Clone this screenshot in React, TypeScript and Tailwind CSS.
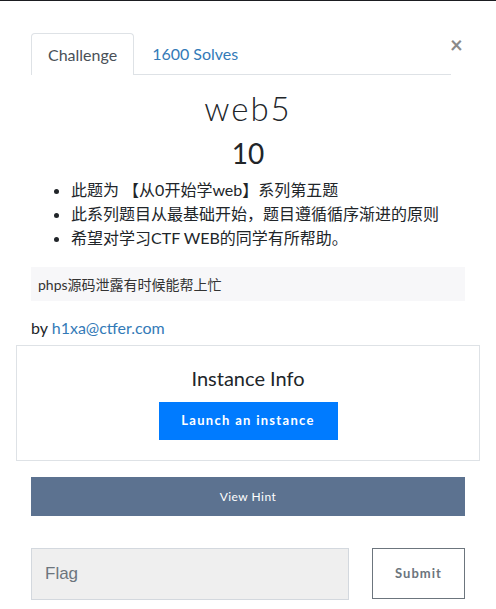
import React from "react";

export default function App() {
  const bullets = [
    "此题为 【从0开始学web】系列第五题",
    "此系列题目从最基础开始，题目遵循循序渐进的原则",
    "希望对学习CTF WEB的同学有所帮助。",
  ];

  return (
    <div
      className="w-[496px] h-[609px] bg-white overflow-hidden text-[#212529]"
      style={{ fontFamily: "Lato, 'Noto Sans CJK SC', sans-serif" }}
    >
      {/* backdrop edge */}
      <div className="h-px bg-[#1b1d21]" />

      <div className="px-[31px] pt-[32px]">
        {/* Tabs */}
        <div className="flex items-end">
          <div className="flex flex-1 border-b border-[#dee2e6] mr-[14px]">
            <div className="h-[42px] px-[16px] flex items-center border border-b-0 border-[#dee2e6] rounded-t-[4px] bg-white -mb-px text-[16px] text-[#495057]">
              Challenge
            </div>
            <div className="h-[41px] px-[18px] flex items-center text-[16px] text-[#337ab7]">
              1600 Solves
            </div>
          </div>
          <button className="absolute left-[450px] top-[34px] text-[22px] leading-none font-bold text-[#8a8a8a]">
            ×
          </button>
        </div>

        {/* Title */}
        <h2 className="mt-[13px] text-center text-[33px] leading-[40px] font-light tracking-[0.06em]">web5</h2>
        <h3 className="mt-[6px] text-center text-[28px] leading-[38px]">10</h3>

        <ul className="mt-[6px] pl-[40px] list-disc text-[16px] marker:text-[#212529]">
          {bullets.map((b) => (
            <li key={b} className="h-[24px] leading-[24px]">{b}</li>
          ))}
        </ul>

        <div className="mt-[17px] h-[34px] bg-[#f7f7f9] px-[7px] flex items-center text-[14px] text-[#333]">
          phps源码泄露有时候能帮上忙
        </div>

        <p className="mt-[16px] text-[16px] leading-[22px]">
          by <span className="text-[#337ab7]">h1xa@ctfer.com</span>
        </p>

        {/* Instance */}
        <div className="-mx-[15px] mt-[6px] h-[116px] border border-[#dee2e6] flex flex-col items-center pt-[20px]">
          <div className="text-[20px] leading-[24px]">Instance Info</div>
          <button className="mt-[12px] w-[179px] h-[38px] bg-[#007bff] text-white text-[13px] font-bold tracking-[0.1em]">
            Launch an instance
          </button>
        </div>

        <button className="mt-[16px] w-full h-[39px] bg-[#5c7290] text-white text-[12px] tracking-[0.04em]">
          View Hint
        </button>

        <div className="mt-[32px] flex justify-between">
          <div className="w-[318px] h-[52px] bg-[#efefef] border border-[#d3d8de] flex items-center pl-[13px]">
            <span
              className="text-[17px] text-[#6c757d]"
              style={{ fontFamily: "'Liberation Sans', Arial, sans-serif" }}
            >
              Flag
            </span>
          </div>
          <button className="w-[93px] h-[51px] border border-[#6c757d] text-[13px] font-bold text-[#6c757d] tracking-[0.08em]">
            Submit
          </button>
        </div>
      </div>
    </div>
  );
}
